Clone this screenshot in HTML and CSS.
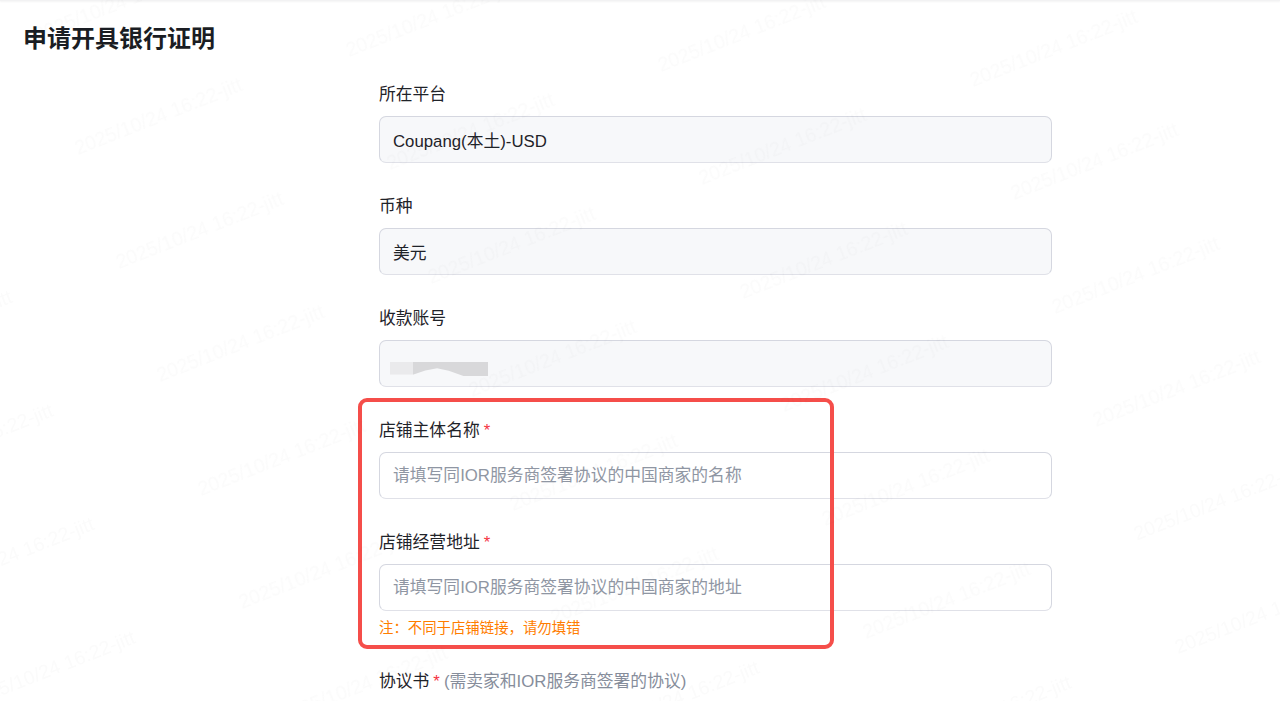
FILE: index.html
```html
<!DOCTYPE html>
<html lang="zh-CN">
<head>
    <meta charset="utf-8">
    <title>申请开具银行证明</title>
    <link rel="stylesheet" href="styles.css">
</head>
<body>
<div class="top-line"></div>
<h1 class="page-title">申请开具银行证明</h1>

<div class="form">
    <div class="form-item">
        <label class="form-label">所在平台</label>
        <div class="form-value">Coupang(本土)-USD</div>
    </div>
    <div class="form-item">
        <label class="form-label">币种</label>
        <div class="form-value">美元</div>
    </div>
    <div class="form-item">
        <label class="form-label">收款账号</label>
        <div class="form-value"><span class="masked"></span></div>
    </div>
    <div class="form-item">
        <label class="form-label">店铺主体名称<span class="required">*</span></label>
        <input class="form-input" type="text" placeholder="请填写同IOR服务商签署协议的中国商家的名称">
    </div>
    <div class="form-item">
        <label class="form-label">店铺经营地址<span class="required">*</span></label>
        <input class="form-input" type="text" placeholder="请填写同IOR服务商签署协议的中国商家的地址">
        <p class="form-note">注：不同于店铺链接，请勿填错</p>
    </div>
    <div class="form-item">
        <label class="form-label">协议书<span class="required">*</span><span class="label-hint">(需卖家和IOR服务商签署的协议)</span></label>
    </div>
    <!-- red marker drawn over the two shop fields -->
    <div class="marker"></div>
</div>

<svg id="watermark" class="watermark" width="1280" height="701"></svg>
<script src="watermark.js"></script>
</body>
</html>
```

FILE: styles.css
```css
html, body {
    margin: 0;
    height: 701px;
    overflow: hidden;
    background: #fff;
}
body {
    font-family: "Liberation Sans", "Noto Sans CJK SC", sans-serif;
    color: #1f2329;
}
.top-line {
    height: 1px;
    background: #f2f2f3;
    box-shadow: 0 1px 2px rgba(0, 0, 0, 0.07);
}
.page-title {
    margin: 22px 0 25px 23px;
    font-size: 24px;
    line-height: 32px;
    font-weight: 700;
    color: #1a1d23;
}
.form {
    position: relative;
    width: 673px;
    margin-left: 379px;
}
.form-item {
    margin-bottom: 29px;
}
.form-label {
    display: block;
    height: 29px;
    margin-bottom: 7px;
    font-size: 16.8px;
    line-height: 29px;
}
.required {
    margin-left: 4px;
    color: #f5333f;
}
.label-hint {
    margin-left: 4px;
    color: #868d9b;
}
.form-value,
.form-input {
    display: flex;
    align-items: center;
    box-sizing: border-box;
    width: 100%;
    height: 47px;
    padding: 0 13px;
    border: 1px solid #d5d7e0;
    border-bottom-color: #e0e1e8;
    border-radius: 7px;
    font-family: inherit;
    font-size: 16.8px;
    color: #1f2329;
    outline: none;
}
.form-value {
    background: #f7f8fa;
}
.form-input {
    background: transparent;
}
.form-input::placeholder {
    color: #8f96a3;
    opacity: 1;
}
.form-note {
    margin: 7px 0 8px;
    font-size: 14.4px;
    line-height: 20px;
    color: #ff7d00;
}
.masked {
    width: 98px;
    height: 14px;
    margin-left: -3px;
    margin-top: 11px;
    background: linear-gradient(to right, #eaeaec 23%, #d8d8da 23%);
    clip-path: polygon(0 0, 100% 0, 100% 100%, 75% 100%, 60% 62%, 48% 45%, 36% 60%, 24% 90%, 0 90%);
    filter: blur(0.6px);
}
.marker {
    position: absolute;
    left: -21px;
    top: 318px;
    box-sizing: border-box;
    width: 476px;
    height: 251px;
    border: 4px solid #f54e4a;
    border-radius: 9px;
}
.watermark {
    position: absolute;
    left: 0;
    top: 0;
    pointer-events: none;
    mix-blend-mode: multiply;
}
.watermark text {
    font-family: "Liberation Sans", sans-serif;
    font-size: 19.5px;
    fill: #fbfbfb;
}
```

FILE: watermark.js
```js
// repeat the date stamp over the whole page
const svg = document.getElementById("watermark");
for (let i = -3; i < 5; i++) {
    for (let j = -4; j < 5; j++) {
        const x = 160 + i * 312 + j * 41;
        const y = 382 + i * 15 + j * 113.5;
        if (x < -200 || x > 1280 || y < 0 || y > 780) continue;
        const text = document.createElementNS("http://www.w3.org/2000/svg", "text");
        text.setAttribute("x", x);
        text.setAttribute("y", y);
        text.setAttribute("transform", `rotate(-21.4 ${x} ${y})`);
        text.textContent = "2025/10/24 16:22-jitt";
        svg.appendChild(text);
    }
}
```
